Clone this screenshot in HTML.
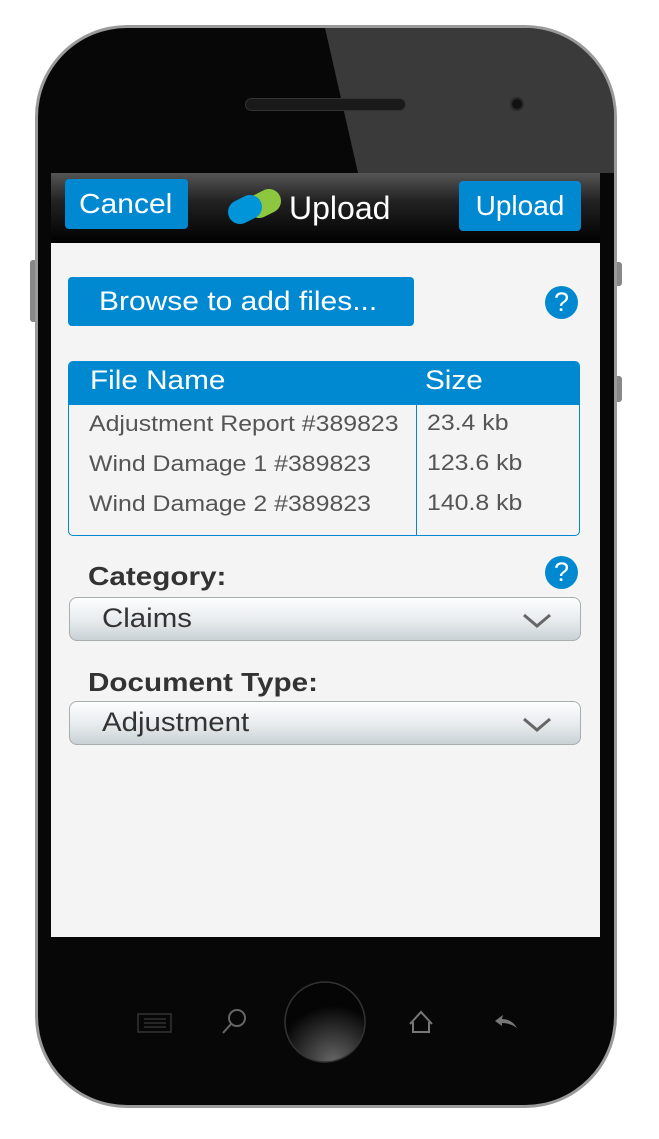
<!DOCTYPE html>
<html><head><meta charset="utf-8"><style>
*{margin:0;padding:0;box-sizing:border-box}
body{width:659px;height:1139px;background:#fff;position:relative;overflow:hidden;font-family:"Liberation Sans",Arial,sans-serif}
.a{position:absolute}
.s{display:inline-block;transform:scaleX(1.13);transform-origin:0 50%;white-space:nowrap}
.btn{position:absolute;background:#0088d1;color:#fff;border-radius:4px;font-size:28px;line-height:50px}
.q{position:absolute;width:33px;height:33px;border-radius:50%;background:#0088d1;color:#fff;font-size:27px;line-height:33px;text-align:center}
.dd{position:absolute;left:69px;width:512px;height:44px;border:1px solid #a8adb0;border-radius:8px;background:linear-gradient(#fefefe,#e9edef 50%,#c9d1d6);font-size:27px;color:#333;line-height:40px;padding-left:32px}
.lbl{position:absolute;left:88px;font-size:26px;font-weight:bold;color:#333}
.cell{position:absolute;font-size:22px;color:#555}
</style></head><body>
<div class="a" style="left:30px;top:260px;width:8px;height:62px;background:#888;border-radius:3px"></div>
<div class="a" style="left:614px;top:262px;width:8px;height:24px;background:#888;border-radius:3px"></div>
<div class="a" style="left:614px;top:376px;width:8px;height:26px;background:#888;border-radius:3px"></div>
<div class="a" style="left:35px;top:25px;width:582px;height:1083px;border-radius:92px;background:#9a9a9a"></div>
<div class="a" style="left:38px;top:28px;width:576px;height:1077px;border-radius:89px;background:#070707;overflow:hidden">
<svg width="576" height="145" class="a" style="left:0;top:0"><polygon points="287,0 576,0 576,145 320,145" fill="#3a3a3a"/></svg>
</div>
<div class="a" style="left:245px;top:98px;width:161px;height:13px;border-radius:7px;background:#1a1a1a;border:1px solid #333"></div>
<div class="a" style="left:510px;top:97px;width:14px;height:14px;border-radius:50%;background:#111;border:2px solid #2a2a2a"></div>
<div class="a" style="left:51px;top:173px;width:549px;height:764px;background:#f4f4f4;overflow:hidden">
<div class="a" style="left:0;top:0;width:549px;height:70px;background:linear-gradient(#555,#222 40%,#000)"></div>
</div>
<div class="btn" style="left:65px;top:179px;width:123px;padding-left:14px"><span class="s" style="transform:scaleX(1.07)">Cancel</span></div>
<svg class="a" style="left:226px;top:186px" width="60" height="42">
<line x1="43" y1="15" x2="33" y2="20" stroke="#8dc63f" stroke-width="24" stroke-linecap="round"/>
<line x1="14" y1="26" x2="24" y2="21" stroke="#0095d9" stroke-width="24" stroke-linecap="round"/>
</svg>
<div class="a" style="left:289px;top:190px;font-size:32px;color:#fff">Upload</div>
<div class="btn" style="left:459px;top:181px;width:122px;text-align:center">Upload</div>
<div class="btn" style="left:68px;top:277px;width:346px;height:49px;line-height:49px;font-size:27px;padding-left:31px"><span class="s" style="transform:scaleX(1.11)">Browse to add files...</span></div>
<div class="q" style="left:545px;top:286px">?</div>
<div class="a" style="left:68px;top:361px;width:512px;height:175px;border:1px solid #0088d1;border-radius:5px;overflow:hidden">
<div class="a" style="left:0;top:0;width:512px;height:43px;background:#0088d1"></div>
<div class="a" style="left:347px;top:43px;width:1px;height:132px;background:#0088d1"></div>
</div>
<div class="a" style="left:90px;top:365px;font-size:27px;color:#fff"><span class="s" style="transform:scaleX(1.1)">File Name</span></div>
<div class="a" style="left:425px;top:365px;font-size:27px;color:#fff"><span class="s" style="transform:scaleX(1.1)">Size</span></div>
<div class="cell" style="left:89px;top:411px"><span class="s">Adjustment Report #389823</span></div>
<div class="cell" style="left:89px;top:451px"><span class="s">Wind Damage 1 #389823</span></div>
<div class="cell" style="left:89px;top:491px"><span class="s">Wind Damage 2 #389823</span></div>
<div class="cell" style="left:427px;top:410px"><span class="s">23.4 kb</span></div>
<div class="cell" style="left:427px;top:450px"><span class="s">123.6 kb</span></div>
<div class="cell" style="left:427px;top:490px"><span class="s">140.8 kb</span></div>
<div class="lbl" style="top:561px"><span class="s" style="transform:scaleX(1.14)">Category:</span></div>
<div class="q" style="left:545px;top:556px">?</div>
<div class="dd" style="top:597px"><span class="s" style="transform:scaleX(1.09)">Claims</span></div>
<svg class="a" style="left:522px;top:611px" width="30" height="18"><polyline points="2,4 15,15 28,4" fill="none" stroke="#666" stroke-width="3"/></svg>
<div class="lbl" style="top:667px"><span class="s" style="transform:scaleX(1.14)">Document Type:</span></div>
<div class="dd" style="top:701px"><span class="s" style="transform:scaleX(1.09)">Adjustment</span></div>
<svg class="a" style="left:522px;top:715px" width="30" height="18"><polyline points="2,4 15,15 28,4" fill="none" stroke="#666" stroke-width="3"/></svg>
<svg class="a" style="left:0;top:970px" width="659" height="110">
<defs><radialGradient id="g" cx="0.6" cy="1" r="0.7"><stop offset="0" stop-color="#666"/><stop offset="1" stop-color="#050505"/></radialGradient></defs>
<rect x="138" y="44" width="33" height="18" fill="none" stroke="#333" stroke-width="1.5"/>
<line x1="144" y1="49" x2="166" y2="49" stroke="#444"/><line x1="144" y1="53" x2="166" y2="53" stroke="#444"/><line x1="144" y1="57" x2="166" y2="57" stroke="#444"/>
<circle cx="237" cy="48" r="8" fill="none" stroke="#666" stroke-width="2"/><line x1="231" y1="54" x2="223" y2="63" stroke="#666" stroke-width="2"/>
<ellipse cx="325" cy="52" rx="40" ry="40" fill="url(#g)" stroke="#333" stroke-width="1.5"/>
<path d="M410 54 L421 42 L432 54 M413 52 L413 62 L429 62 L429 52" fill="none" stroke="#777" stroke-width="2"/>
<path d="M495 51 L503 45 L502 49 Q512 49 517 58 Q510 53 502 53 L502 56Z" fill="#777"/>
</svg>
</body></html>
